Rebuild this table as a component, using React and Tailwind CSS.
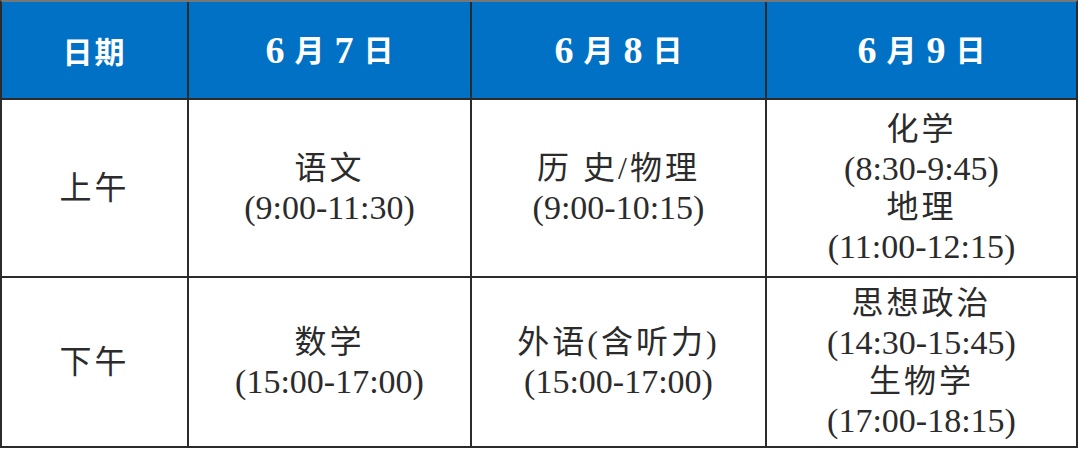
import React from "react";

function Lines({ lines }) {
  return (
    <div className="flex flex-col items-center justify-center bg-white text-[#2b2b2b] leading-[39px]">
      {lines.map((l, i) => (
        <div key={i} className={l.startsWith("(") ? "text-[34px]" : "text-[32px] font-normal tracking-[3px]"}>{l}</div>
      ))}
    </div>
  );
}

function Head({ children }) {
  return (
    <div className="flex items-center justify-center bg-[#0071c5] text-white font-bold text-[30px]">
      {children}
    </div>
  );
}

function Date({ d }) {
  return (
    <Head>
      <span className="text-[38px] leading-none">6</span>
      <span className="ml-[10px]">月</span>
      <span className="ml-[10px] text-[38px] leading-none">{d}</span>
      <span className="ml-[10px]">日</span>
    </Head>
  );
}

export default function App() {
  return (
    <div
      className="w-[1078px] h-[448px] bg-[#2b2b2b] border-2 border-[#2b2b2b] border-t-[#777] grid grid-cols-[185px_281px_293px_309px] grid-rows-[96px_176px_168px] gap-[2px]"
      style={{ fontFamily: '"Liberation Serif", "Noto Sans CJK SC", serif' }}
    >
      <Head><span className="tracking-[2px]" style={{ fontFamily: '"Noto Sans CJK SC", sans-serif' }}>日期</span></Head>
      <Date d="7" />
      <Date d="8" />
      <Date d="9" />
      <Lines lines={["上午"]} />
      <Lines lines={["语文", "(9:00-11:30)"]} />
      <Lines lines={["历 史/物理", "(9:00-10:15)"]} />
      <Lines lines={["化学", "(8:30-9:45)", "地理", "(11:00-12:15)"]} />
      <Lines lines={["下午"]} />
      <Lines lines={["数学", "(15:00-17:00)"]} />
      <Lines lines={["外语(含听力)", "(15:00-17:00)"]} />
      <Lines lines={["思想政治", "(14:30-15:45)", "生物学", "(17:00-18:15)"]} />
    </div>
  );
}
